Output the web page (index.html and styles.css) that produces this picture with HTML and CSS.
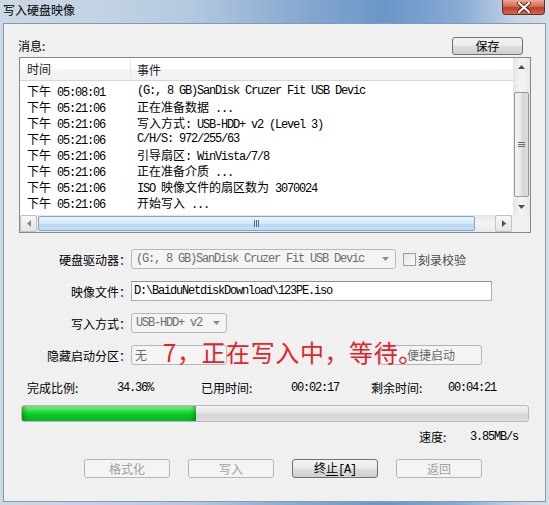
FILE: index.html
```html
<!DOCTYPE html>
<html>

<head>
    <title>写入硬盘映像</title>
    <link rel="stylesheet" href="styles.css">
</head>

<body>
    <div class="window">
        <!--Tittel-->
        <div class="titlebar">
            <span class="title">写入硬盘映像</span>
            <span class="close-btn">
                <svg width="14" height="11" viewBox="0 0 14 11">
                    <path d="M2 1 L12 10 M12 1 L2 10" stroke="#5a1d16" stroke-width="4" stroke-linecap="round"/>
                    <path d="M2 1 L12 10 M12 1 L2 10" stroke="#fff" stroke-width="2.2" stroke-linecap="round"/>
                </svg>
            </span>
        </div>

        <div class="client">
            <!--Meldinger-->
            <div class="msg-head">
                <span>消息:</span>
                <button class="btn btn-on btn-save">保存</button>
            </div>

            <div class="listbox">
                <div class="list-view">
                    <div class="list-header">
                        <span class="col-time">时间</span>
                        <span class="col-event">事件</span>
                    </div>
                    <div class="list-rows mono">
                        <div class="row"><span class="col-time"><span class="cjk">下午</span> 05:08:01</span><span class="col-event">(G:, 8 GB)SanDisk Cruzer Fit USB Devic</span></div>
                        <div class="row"><span class="col-time"><span class="cjk">下午</span> 05:21:06</span><span class="col-event"><span class="cjk">正在准备数据</span> ...</span></div>
                        <div class="row"><span class="col-time"><span class="cjk">下午</span> 05:21:06</span><span class="col-event"><span class="cjk">写入方式</span>: USB-HDD+ v2 (Level 3)</span></div>
                        <div class="row"><span class="col-time"><span class="cjk">下午</span> 05:21:06</span><span class="col-event">C/H/S: 972/255/63</span></div>
                        <div class="row"><span class="col-time"><span class="cjk">下午</span> 05:21:06</span><span class="col-event"><span class="cjk">引导扇区</span>: WinVista/7/8</span></div>
                        <div class="row"><span class="col-time"><span class="cjk">下午</span> 05:21:06</span><span class="col-event"><span class="cjk">正在准备介质</span> ...</span></div>
                        <div class="row"><span class="col-time"><span class="cjk">下午</span> 05:21:06</span><span class="col-event">ISO <span class="cjk">映像文件的扇区数为</span> 3070024</span></div>
                        <div class="row"><span class="col-time"><span class="cjk">下午</span> 05:21:06</span><span class="col-event"><span class="cjk">开始写入</span> ...</span></div>
                    </div>
                </div>

                <!--Rullefelt-->
                <div class="vscroll">
                    <div class="sb-btn">
                        <svg width="7" height="4" viewBox="0 0 7 4"><path d="M0 4 L3.5 0 L7 4 Z" fill="#4d4d4d"/></svg>
                    </div>
                    <div class="sb-track">
                        <div class="vthumb">
                            <svg width="7" height="6" viewBox="0 0 7 6"><path d="M0 0.5 H7 M0 2.5 H7 M0 4.5 H7" stroke="#6a6a6a" stroke-width="1"/></svg>
                        </div>
                    </div>
                    <div class="sb-btn">
                        <svg width="7" height="4" viewBox="0 0 7 4"><path d="M0 0 L3.5 4 L7 0 Z" fill="#4d4d4d"/></svg>
                    </div>
                </div>
                <div class="hscroll">
                    <div class="sb-btn boxed">
                        <svg width="4" height="7" viewBox="0 0 4 7"><path d="M4 0 L0 3.5 L4 7 Z" fill="#8a8a8a"/></svg>
                    </div>
                    <div class="hthumb">
                        <svg width="6" height="7" viewBox="0 0 6 7"><path d="M0.5 0 V7 M2.5 0 V7 M4.5 0 V7" stroke="#47698f" stroke-width="1"/></svg>
                    </div>
                    <div class="sb-track"></div>
                    <div class="sb-btn boxed">
                        <svg width="4" height="7" viewBox="0 0 4 7"><path d="M0 0 L4 3.5 L0 7 Z" fill="#4d4d4d"/></svg>
                    </div>
                </div>
                <div class="corner"></div>
            </div>

            <!--Innstillinger-->
            <div class="form">
                <div class="form-row">
                    <label class="form-label">硬盘驱动器：</label>
                    <div class="combo combo-drive mono">(G:, 8 GB)SanDisk Cruzer Fit USB Devic
                        <svg class="arrow" width="7" height="4" viewBox="0 0 7 4"><path d="M0 0 L3.5 4 L7 0 Z" fill="#8c8c8c"/></svg>
                    </div>
                    <span class="checkbox"></span>
                    <span class="check-label">刻录校验</span>
                </div>
                <div class="form-row">
                    <label class="form-label">映像文件：</label>
                    <div class="textbox mono">D:\BaiduNetdiskDownload\123PE.iso</div>
                </div>
                <div class="form-row">
                    <label class="form-label">写入方式：</label>
                    <div class="combo combo-mode mono">USB-HDD+ v2
                        <svg class="arrow" width="7" height="4" viewBox="0 0 7 4"><path d="M0 0 L3.5 4 L7 0 Z" fill="#8c8c8c"/></svg>
                    </div>
                </div>
                <div class="form-row note-row">
                    <label class="form-label">隐藏启动分区：</label>
                    <div class="combo combo-hide">无</div>
                    <button class="btn btn-quick">便捷启动</button>
                    <div class="note">7，正在写入中，等待。</div>
                </div>
            </div>

            <!--Fremdrift-->
            <div class="stats">
                <span>完成比例:</span>
                <span class="mono">34.36%</span>
                <span>已用时间:</span>
                <span class="mono">00:02:17</span>
                <span>剩余时间:</span>
                <span class="mono">00:04:21</span>
            </div>
            <div class="progress">
                <div class="progress-fill" style="width: 34.36%"></div>
            </div>
            <div class="speed">
                <span class="speed-label">速度:</span>
                <span class="mono">3.85MB/s</span>
            </div>

            <div class="buttons">
                <button class="btn">格式化</button>
                <button class="btn">写入</button>
                <button class="btn btn-on">终<u>止</u><span class="mono">[A]</span></button>
                <button class="btn">返回</button>
            </div>
        </div>
    </div>
</body>

</html>
```

FILE: styles.css
```css
* {
    box-sizing: border-box;
}

body {
    margin: 0;
    font-family: "Noto Sans CJK SC", sans-serif;
    font-size: 12px;
    color: #000;
}

/* Vinduet */
.window {
    width: 549px;
    height: 505px;
    padding: 0 3px 3px 3px;
    display: flex;
    flex-direction: column;
    background: linear-gradient(90deg, #cbd8e5 0%, #c3d3e4 18%, #b3c8df 35%, #86a8d0 55%, #6b96c9 70%, #88abd4 84%, #c4d4e6 94%, #d3dee9 100%);
}

.titlebar {
    height: 23px;
    display: flex;
    justify-content: space-between;
    align-items: flex-start;
    padding-right: 1px;
}

.title {
    font-size: 12px;
    line-height: 14px;
    padding-top: 3px;
    color: #000;
}

.close-btn {
    width: 43px;
    height: 15px;
    display: flex;
    align-items: center;
    justify-content: center;
    border: 1px solid #6d2b22;
    border-top: none;
    border-radius: 0 0 4px 4px;
    background: linear-gradient(#e9a898, #d66b5a 45%, #c33b27 55%, #cf6a4f);
}

.client {
    flex: 1;
    border: 1px solid #8799ae;
    background: #f0f0f0;
    padding-left: 15px;
    position: relative;
}

.mono {
    font-family: "Liberation Mono", monospace;
    font-size: 12px;
    letter-spacing: -1.2px;
}

.cjk {
    font-family: "Noto Sans CJK SC", sans-serif;
    font-size: 12px;
    letter-spacing: 0;
}

/* Knapper */
.btn {
    height: 19px;
    padding: 0;
    border: 1px solid #b1b5b8;
    border-radius: 3px;
    background: #f4f4f4;
    color: #a0a0a0;
    font-family: "Noto Sans CJK SC", sans-serif;
    font-size: 12px;
    line-height: 16px;
}

.btn-on {
    border-color: #707070;
    color: #000;
    background: linear-gradient(#f3f3f3, #ebebeb 48%, #dddddd 52%, #cfcfcf);
}

.msg-head {
    margin-top: 13px;
    width: 512px;
    height: 20px;
    display: flex;
    justify-content: space-between;
    align-items: flex-start;
    padding-right: 8px;
}

.msg-head span {
    margin-left: -1px;
    line-height: 18px;
}

.btn-save {
    width: 71px;
    height: 18px;
}

/* Listen */
.listbox {
    width: 512px;
    height: 176px;
    border: 1px solid #828790;
    background: #fff;
    display: grid;
    grid-template-columns: 493px 17px;
    grid-template-rows: 157px 17px;
}

.list-view {
    overflow: hidden;
}

.list-header {
    height: 23px;
    display: flex;
    align-items: center;
    border-bottom: 1px solid #d5d5d5;
    background: linear-gradient(#ffffff, #ffffff 50%, #f4f5f7 51%, #f1f2f4);
    color: #1e1e1e;
}

.col-time {
    width: 117px;
    padding-left: 7px;
    flex-shrink: 0;
    white-space: nowrap;
}

.list-header .col-time {
    border-right: 1px solid #e3e5e8;
    width: 111px;
    height: 22px;
    line-height: 22px;
}

.list-header .col-event {
    padding-left: 6px;
}

.col-event {
    white-space: nowrap;
}

.list-rows {
    padding-top: 2px;
}

.row {
    display: flex;
    height: 16px;
    line-height: 16px;
}

/* Rullefelt */
.vscroll {
    display: flex;
    flex-direction: column;
    background: linear-gradient(90deg, #e5e5e5, #f2f2f2 40%, #f2f2f2 60%, #e8e8e8);
}

.sb-btn {
    width: 17px;
    height: 17px;
    flex-shrink: 0;
    display: flex;
    align-items: center;
    justify-content: center;
}

.sb-btn.boxed {
    border: 1px solid #c2c2c2;
    border-radius: 2px;
    background: linear-gradient(#f7f7f7, #e4e4e4);
}

.sb-track {
    flex: 1;
}

.vthumb {
    margin-top: 17px;
    margin-left: 1px;
    width: 15px;
    height: 105px;
    border: 1px solid #979797;
    border-radius: 2px;
    background: linear-gradient(90deg, #f4f4f4, #e6e6e6 50%, #d6d6d6 51%, #dcdcdc);
    display: flex;
    align-items: center;
    justify-content: center;
}

.hscroll {
    display: flex;
    background: linear-gradient(#e5e5e5, #f2f2f2 40%, #f2f2f2 60%, #e8e8e8);
    padding-right: 1px;
}

.hthumb {
    width: 437px;
    height: 15px;
    margin: 1px 0 0 1px;
    border: 1px solid #7fa6cd;
    border-radius: 2px;
    background: linear-gradient(#eaf5fd, #d4e8f8 50%, #bcd9f2 51%, #c4def4);
    display: flex;
    align-items: center;
    justify-content: center;
}

.corner {
    background: #f0f0f0;
}

/* Skjema */
.form {
    margin-top: 16px;
    display: flex;
    flex-direction: column;
    gap: 12px;
}

.form-row {
    display: flex;
    align-items: center;
    height: 20px;
}

.form-label {
    width: 112px;
    text-align: right;
    white-space: nowrap;
}

.combo {
    height: 20px;
    line-height: 18px;
    border: 1px solid #b6b8bb;
    border-radius: 3px;
    background: #f4f4f4;
    color: #6d6d6d;
    padding-left: 4px;
    position: relative;
    white-space: nowrap;
}

.combo .arrow {
    position: absolute;
    right: 6px;
    top: 7px;
}

.combo-drive {
    width: 265px;
}

.combo-mode {
    width: 96px;
}

.combo-hide {
    width: 96px;
    padding-left: 3px;
}

.checkbox {
    width: 13px;
    height: 13px;
    margin-left: 7px;
    border: 1px solid #9c9c9c;
    background: linear-gradient(135deg, #e6e6e6, #fafafa);
}

.check-label {
    margin-left: 2px;
    color: #4a4a4a;
}

.textbox {
    width: 361px;
    height: 20px;
    line-height: 18px;
    border: 1px solid #abadb3;
    border-top-color: #8d9096;
    background: #fff;
    padding-left: 2px;
    white-space: nowrap;
}

.note-row {
    position: relative;
}

.btn-quick {
    width: 102px;
    height: 20px;
    margin-left: 153px;
    color: #6a6a6a;
}

.note {
    position: absolute;
    left: 144px;
    top: -5px;
    font-size: 24px;
    line-height: 24px;
    letter-spacing: 0.6px;
    color: #e2242a;
    white-space: nowrap;
}

/* Fremdrift */
.stats {
    margin-top: 15px;
    height: 16px;
    line-height: 16px;
    padding-left: 8px;
    display: grid;
    grid-template-columns: 90px 84px 90px 80px 77px auto;
}

.progress {
    margin: 9px 0 0 2px;
    width: 508px;
    height: 17px;
    border: 1px solid #b8b8b8;
    border-radius: 3px;
    background: linear-gradient(#f2f2f2, #e3e3e3 45%, #d4d4d4 55%, #dedede);
    overflow: hidden;
}

.progress-fill {
    height: 100%;
    background: linear-gradient(#8ef08e, #31d944 35%, #06cc24 55%, #04c11f 80%, #20b53a);
    box-shadow: inset 4px 0 4px -2px rgba(0, 70, 0, 0.45), inset -4px 0 4px -2px rgba(0, 70, 0, 0.45);
}

.speed {
    margin-top: 7px;
    height: 16px;
    line-height: 16px;
    padding-left: 400px;
    display: flex;
}

.speed-label {
    width: 51px;
}

.buttons {
    margin-top: 14px;
    padding-left: 65px;
    display: flex;
    gap: 18px;
}

.buttons .btn {
    width: 86px;
}

.buttons .btn u {
    text-underline-offset: 2px;
}
```
